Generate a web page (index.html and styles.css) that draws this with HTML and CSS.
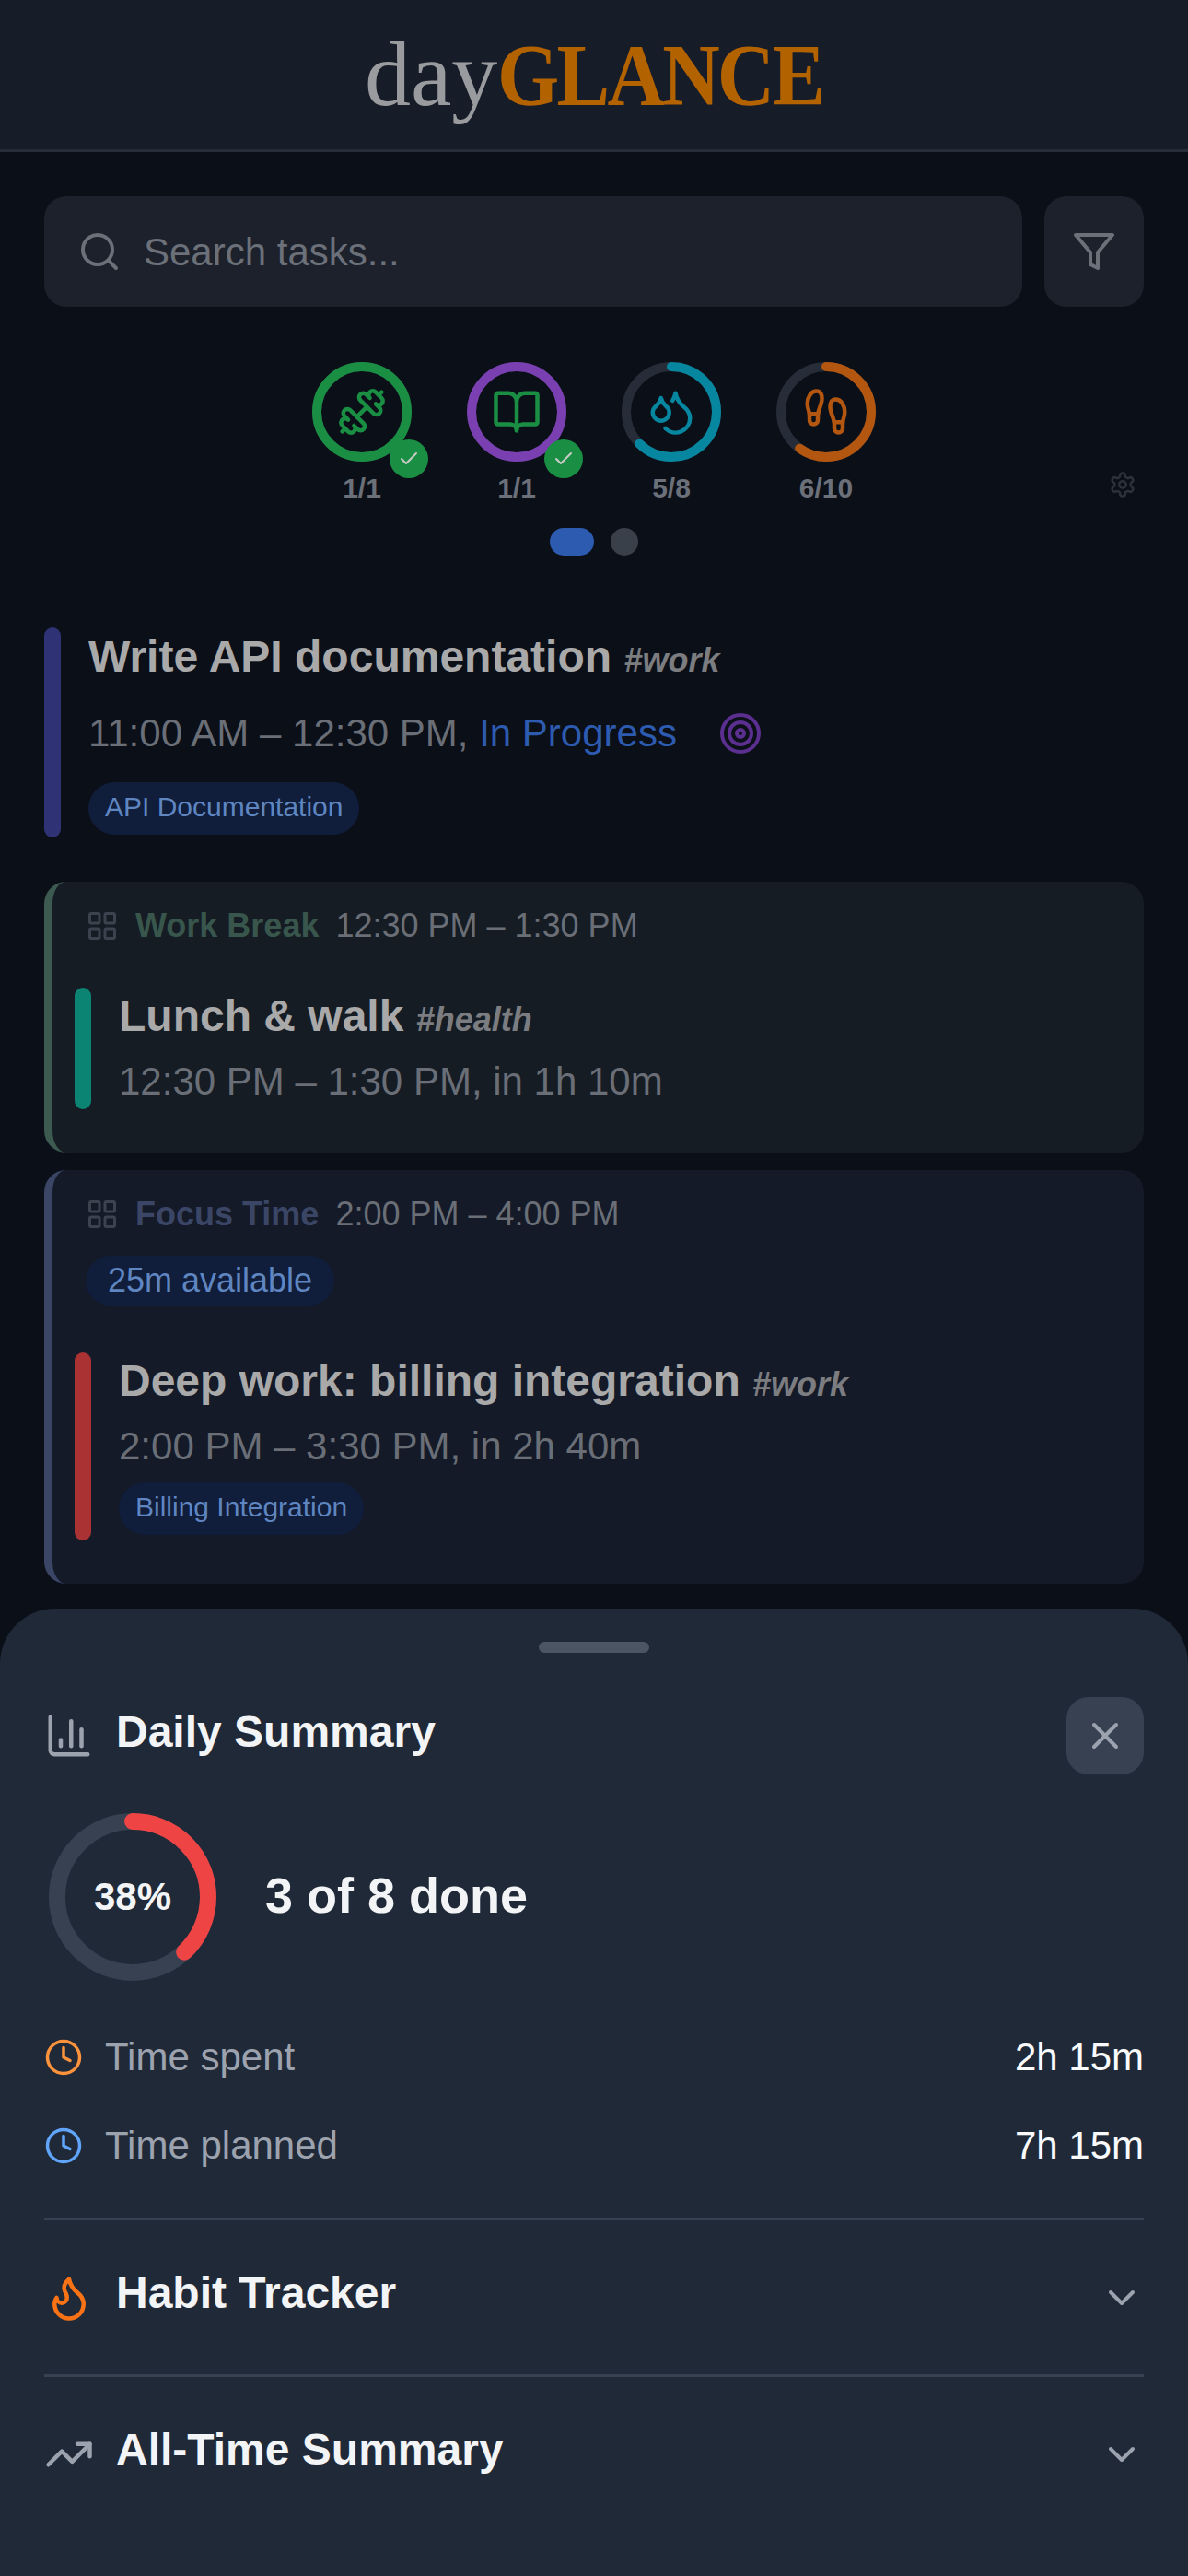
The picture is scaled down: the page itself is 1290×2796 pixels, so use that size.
FILE: index.html
```html
<!DOCTYPE html>
<html>

<head>
    <meta charset="utf-8">
    <title>dayGLANCE</title>
    <link rel="stylesheet" href="styles.css">
</head>

<body>
    <header class="topbar">
        <h1 class="logo"><span class="logo-day">day</span><span class="logo-glance">GLANCE</span></h1>
    </header>

    <main class="content">
        <div class="search-row">
            <div class="search-box">
                <svg class="icon search-icon" viewBox="0 0 24 24"><circle cx="11" cy="11" r="8"/><path d="m21 21-4.3-4.3"/></svg>
                <span class="search-text">Search tasks...</span>
            </div>
            <button class="filter-btn">
                <svg class="icon filter-icon" viewBox="0 0 24 24"><polygon points="22 3 2 3 10 12.46 10 19 14 21 14 12.46 22 3"/></svg>
            </button>
        </div>

        <!-- habit rings -->
        <section class="habits">
            <div class="habit">
                <div class="ring">
                    <svg class="ring-svg" viewBox="0 0 108 108">
                        <circle class="ring-track" cx="54" cy="54" r="49"/>
                        <circle class="ring-fill green" cx="54" cy="54" r="49" pathLength="100" stroke-dasharray="100 100" transform="rotate(-90 54 54)"/>
                    </svg>
                    <svg class="icon ring-icon green-text" viewBox="0 0 24 24"><g transform="matrix(-1 0 0 1 24 0)"><path d="M14.4 14.4 9.6 9.6"/><path d="M18.657 21.485a2 2 0 1 1-2.829-2.828l-1.767 1.768a2 2 0 1 1-2.829-2.829l6.364-6.364a2 2 0 1 1 2.829 2.829l-1.768 1.767a2 2 0 1 1 2.828 2.829z"/><path d="m21.5 21.5-1.4-1.4"/><path d="M3.9 3.9 2.5 2.5"/><path d="M6.404 12.768a2 2 0 1 1-2.829-2.829l1.768-1.767a2 2 0 1 1-2.828-2.829l2.828-2.828a2 2 0 1 1 2.829 2.828l1.767-1.768a2 2 0 1 1 2.829 2.829z"/></g></svg>
                    <span class="ring-check"><svg class="icon check-icon" viewBox="0 0 24 24"><path d="M20 6 9 17l-5-5"/></svg></span>
                </div>
                <div class="habit-count">1/1</div>
            </div>
            <div class="habit">
                <div class="ring">
                    <svg class="ring-svg" viewBox="0 0 108 108">
                        <circle class="ring-track" cx="54" cy="54" r="49"/>
                        <circle class="ring-fill purple" cx="54" cy="54" r="49" pathLength="100" stroke-dasharray="100 100" transform="rotate(-90 54 54)"/>
                    </svg>
                    <svg class="icon ring-icon green-text" viewBox="0 0 24 24"><path d="M12 7v14"/><path d="M3 18a1 1 0 0 1-1-1V4a1 1 0 0 1 1-1h5a4 4 0 0 1 4 4 4 4 0 0 1 4-4h5a1 1 0 0 1 1 1v13a1 1 0 0 1-1 1h-6a3 3 0 0 0-3 3 3 3 0 0 0-3-3z"/></svg>
                    <span class="ring-check"><svg class="icon check-icon" viewBox="0 0 24 24"><path d="M20 6 9 17l-5-5"/></svg></span>
                </div>
                <div class="habit-count">1/1</div>
            </div>
            <div class="habit">
                <div class="ring">
                    <svg class="ring-svg" viewBox="0 0 108 108">
                        <circle class="ring-track" cx="54" cy="54" r="49"/>
                        <circle class="ring-fill teal" cx="54" cy="54" r="49" pathLength="100" stroke-dasharray="62.5 100" transform="rotate(-90 54 54)"/>
                    </svg>
                    <svg class="icon ring-icon teal-text" viewBox="0 0 24 24"><path d="M7 16.3c2.2 0 4-1.83 4-4.05 0-1.16-.57-2.26-1.71-3.19S7.29 6.75 7 5.3c-.29 1.45-1.14 2.84-2.29 3.76S3 11.1 3 12.25c0 2.22 1.8 4.05 4 4.05z"/><path d="M12.56 6.6A10.97 10.97 0 0 0 14 3.02c.5 2.5 2 4.9 4 6.5s3 3.5 3 5.5a6.98 6.98 0 0 1-11.91 4.97"/></svg>
                </div>
                <div class="habit-count">5/8</div>
            </div>
            <div class="habit">
                <div class="ring">
                    <svg class="ring-svg" viewBox="0 0 108 108">
                        <circle class="ring-track" cx="54" cy="54" r="49"/>
                        <circle class="ring-fill orange" cx="54" cy="54" r="49" pathLength="100" stroke-dasharray="60 100" transform="rotate(-90 54 54)"/>
                    </svg>
                    <svg class="icon ring-icon orange-text" viewBox="0 0 24 24"><path d="M4 16v-2.38C4 11.5 2.97 10.5 3 8c.03-2.72 1.49-6 4.5-6C9.37 2 10 3.8 10 5.5c0 3.11-2 5.66-2 8.68V16a2 2 0 1 1-4 0Z"/><path d="M20 20v-2.38c0-2.12 1.03-3.12 1-5.62-.03-2.72-1.44-6-4.5-6C14.63 6 14 7.8 14 9.5c0 3.11 2 5.66 2 8.68V20a2 2 0 1 0 4 0Z"/><path d="M16 17h4"/><path d="M4 13h4"/></svg>
                </div>
                <div class="habit-count">6/10</div>
            </div>
            <svg class="icon habits-gear" viewBox="0 0 24 24"><path d="M12.22 2h-.44a2 2 0 0 0-2 2v.18a2 2 0 0 1-1 1.73l-.43.25a2 2 0 0 1-2 0l-.15-.08a2 2 0 0 0-2.73.73l-.22.38a2 2 0 0 0 .73 2.73l.15.1a2 2 0 0 1 1 1.72v.51a2 2 0 0 1-1 1.74l-.15.09a2 2 0 0 0-.73 2.73l.22.38a2 2 0 0 0 2.73.73l.15-.08a2 2 0 0 1 2 0l.43.25a2 2 0 0 1 1 1.73V20a2 2 0 0 0 2 2h.44a2 2 0 0 0 2-2v-.18a2 2 0 0 1 1-1.73l.43-.25a2 2 0 0 1 2 0l.15.08a2 2 0 0 0 2.73-.73l.22-.39a2 2 0 0 0-.73-2.73l-.15-.08a2 2 0 0 1-1-1.74v-.5a2 2 0 0 1 1-1.74l.15-.09a2 2 0 0 0 .73-2.73l-.22-.38a2 2 0 0 0-2.73-.73l-.15.08a2 2 0 0 1-2 0l-.43-.25a2 2 0 0 1-1-1.73V4a2 2 0 0 0-2-2z"/><circle cx="12" cy="12" r="3"/></svg>
        </section>

        <div class="pager">
            <span class="pager-dot active"></span>
            <span class="pager-dot"></span>
        </div>

        <!-- schedule -->
        <article class="task task-open">
            <div class="task-bar indigo"></div>
            <div class="task-body">
                <div class="task-title">Write API documentation <em class="task-tag">#work</em></div>
                <div class="task-time task-time-row">
                    <span>11:00 AM – 12:30 PM, <span class="in-progress">In Progress</span></span>
                    <svg class="icon target-icon" viewBox="0 0 24 24"><circle cx="12" cy="12" r="10"/><circle cx="12" cy="12" r="6"/><circle cx="12" cy="12" r="2"/></svg>
                </div>
                <span class="pill task-pill">API Documentation</span>
            </div>
        </article>

        <section class="slot slot-break">
            <div class="slot-head">
                <svg class="icon slot-icon" viewBox="0 0 24 24"><rect x="3" y="3" width="7" height="7" rx="1"/><rect x="14" y="3" width="7" height="7" rx="1"/><rect x="14" y="14" width="7" height="7" rx="1"/><rect x="3" y="14" width="7" height="7" rx="1"/></svg>
                <span class="slot-name">Work Break</span>
                <span class="slot-time">12:30 PM – 1:30 PM</span>
            </div>
            <article class="task">
                <div class="task-bar green-bar"></div>
                <div class="task-body">
                    <div class="task-title">Lunch &amp; walk <em class="task-tag">#health</em></div>
                    <div class="task-time">12:30 PM – 1:30 PM, in 1h 10m</div>
                </div>
            </article>
        </section>

        <section class="slot slot-focus">
            <div class="slot-head">
                <svg class="icon slot-icon" viewBox="0 0 24 24"><rect x="3" y="3" width="7" height="7" rx="1"/><rect x="14" y="3" width="7" height="7" rx="1"/><rect x="14" y="14" width="7" height="7" rx="1"/><rect x="3" y="14" width="7" height="7" rx="1"/></svg>
                <span class="slot-name">Focus Time</span>
                <span class="slot-time">2:00 PM – 4:00 PM</span>
            </div>
            <span class="pill slot-pill">25m available</span>
            <article class="task">
                <div class="task-bar red-bar"></div>
                <div class="task-body">
                    <div class="task-title">Deep work: billing integration <em class="task-tag">#work</em></div>
                    <div class="task-time">2:00 PM – 3:30 PM, in 2h 40m</div>
                    <span class="pill nested-pill">Billing Integration</span>
                </div>
            </article>
        </section>
    </main>

    <!-- bottom sheet -->
    <aside class="sheet">
        <div class="sheet-handle"></div>
        <div class="sheet-head">
            <svg class="icon sheet-icon gray-text" viewBox="0 0 24 24"><path d="M3 3v16a2 2 0 0 0 2 2h16"/><path d="M18 17V9"/><path d="M13 17V5"/><path d="M8 17v-3"/></svg>
            <h2 class="sheet-title">Daily Summary</h2>
            <button class="close-btn">
                <svg class="icon close-icon" viewBox="0 0 24 24"><path d="M18 6 6 18"/><path d="m6 6 12 12"/></svg>
            </button>
        </div>

        <div class="progress">
            <div class="progress-ring">
                <svg class="progress-svg" viewBox="0 0 192 192">
                    <circle class="progress-track" cx="96" cy="96" r="82"/>
                    <circle class="progress-fill" cx="96" cy="96" r="82" pathLength="100" stroke-dasharray="38 100" transform="rotate(-90 96 96)"/>
                </svg>
                <span class="progress-pct">38%</span>
            </div>
            <div class="progress-text">3 of 8 done</div>
        </div>

        <div class="stat">
            <svg class="icon stat-icon amber-text" viewBox="0 0 24 24"><circle cx="12" cy="12" r="10"/><path d="M12 6v6l4 2"/></svg>
            <span class="stat-label">Time spent</span>
            <span class="stat-value">2h 15m</span>
        </div>
        <div class="stat">
            <svg class="icon stat-icon blue-text" viewBox="0 0 24 24"><circle cx="12" cy="12" r="10"/><path d="M12 6v6l4 2"/></svg>
            <span class="stat-label">Time planned</span>
            <span class="stat-value">7h 15m</span>
        </div>

        <div class="fold fold-first">
            <svg class="icon sheet-icon flame-text" viewBox="0 0 24 24"><path d="M8.5 14.5A2.5 2.5 0 0 0 11 12c0-1.38-.5-2-1-3-1.072-2.143-.224-4.054 2-6 .5 2.5 2 4.9 4 6.5 2 1.6 3 3.5 3 5.5a7 7 0 1 1-14 0c0-1.153.433-2.294 1-3a2.5 2.5 0 0 0 2.5 2.5z"/></svg>
            <h2 class="sheet-title">Habit Tracker</h2>
            <svg class="icon chevron" viewBox="0 0 24 24"><path d="m6 9 6 6 6-6"/></svg>
        </div>
        <div class="fold">
            <svg class="icon sheet-icon gray-text" viewBox="0 0 24 24"><path d="M22 7 13.5 15.5 8.5 10.5 2 17"/><path d="M16 7h6v6"/></svg>
            <h2 class="sheet-title">All-Time Summary</h2>
            <svg class="icon chevron" viewBox="0 0 24 24"><path d="m6 9 6 6 6-6"/></svg>
        </div>
    </aside>
</body>

</html>
```

FILE: styles.css
```css
* {
    margin: 0;
    padding: 0;
    box-sizing: border-box;
}

body {
    position: relative;
    width: 1290px;
    height: 2796px;
    overflow: hidden;
    background-color: #0b0f18;
    font-family: "Liberation Sans", Arial, sans-serif;
}

button {
    border: none;
    font: inherit;
}

.icon {
    display: block;
    flex-shrink: 0;
    fill: none;
    stroke: currentColor;
    stroke-width: 2;
    stroke-linecap: round;
    stroke-linejoin: round;
}

/* top bar */
.topbar {
    height: 165px;
    padding-top: 26px;
    background-color: #161d28;
    border-bottom: 3px solid #272d39;
    text-align: center;
}

.logo {
    font-family: "Liberation Serif", "Times New Roman", serif;
    font-size: 100px;
    line-height: 110px;
}

.logo-day {
    font-weight: 400;
    color: #9a9b9e;
}

/* squeezed wordmark, the negative margin takes back the width it no longer draws */
.logo-glance {
    display: inline-block;
    margin-right: -39px;
    font-size: 96px;
    font-weight: 700;
    letter-spacing: -3px;
    color: #b36200;
    transform: scaleX(0.9);
    transform-origin: left center;
}

.content {
    padding: 48px 48px 0;
}

/* search */
.search-row {
    display: flex;
    gap: 24px;
}

.search-box {
    flex: 1;
    height: 120px;
    display: flex;
    align-items: center;
    gap: 24px;
    padding-left: 36px;
    background-color: #1c212c;
    border-radius: 24px;
    color: #6b7079;
}

.search-icon {
    width: 48px;
    height: 48px;
}

.search-text {
    padding-top: 1px;
    font-size: 42px;
}

.filter-btn {
    width: 108px;
    height: 120px;
    display: flex;
    align-items: center;
    justify-content: center;
    background-color: #1c212c;
    border-radius: 24px;
    color: #6b7079;
}

.filter-icon {
    width: 48px;
    height: 48px;
}

/* habits */
.habits {
    position: relative;
    display: flex;
    justify-content: center;
    gap: 60px;
    margin-top: 60px;
}

.habit {
    width: 108px;
}

.ring {
    position: relative;
    width: 108px;
    height: 108px;
    display: flex;
    align-items: center;
    justify-content: center;
}

.ring-svg {
    position: absolute;
    top: 0;
    left: 0;
    width: 108px;
    height: 108px;
}

.ring-track,
.ring-fill {
    fill: none;
    stroke-width: 10;
}

.ring-track {
    stroke: #272d38;
}

.ring-fill {
    stroke-linecap: round;
}

.green { stroke: #1a8f44; }
.purple { stroke: #7a3fb0; }
.teal { stroke: #06869f; }
.orange { stroke: #b3560f; }

.green-text { color: #1a8f44; }
.teal-text { color: #06869f; }
.orange-text { color: #b3560f; }

.ring-icon {
    position: relative;
    width: 54px;
    height: 54px;
}

.ring-check {
    position: absolute;
    right: -18px;
    bottom: -18px;
    width: 42px;
    height: 42px;
    display: flex;
    align-items: center;
    justify-content: center;
    background-color: #1a8f44;
    border-radius: 50%;
    color: #c9cbc9;
}

.check-icon {
    width: 24px;
    height: 24px;
}

.habit-count {
    margin-top: 11px;
    font-size: 30px;
    line-height: 36px;
    font-weight: 700;
    text-align: center;
    color: #6b7079;
}

.habits-gear {
    position: absolute;
    top: 118px;
    right: 8px;
    width: 30px;
    height: 30px;
    color: #2c313c;
}

.pager {
    display: flex;
    justify-content: center;
    gap: 18px;
    margin-top: 25px;
}

.pager-dot {
    width: 30px;
    height: 30px;
    border-radius: 15px;
    background-color: #3a404a;
}

.pager-dot.active {
    width: 48px;
    background-color: #2d5bb0;
}

/* tasks */
.task {
    display: flex;
    gap: 30px;
}

.task-open {
    margin-top: 78px;
    margin-bottom: 48px;
}

.task-bar {
    width: 18px;
    flex-shrink: 0;
    border-radius: 9px;
}

.indigo { background-color: #2f3375; }
.green-bar { background-color: #0b8474; }
.red-bar { background-color: #ab3232; }

.task-body {
    padding-top: 1px;
}

.task-open .task-body {
    padding-top: 2px;
}

.task-title {
    font-size: 48px;
    line-height: 60px;
    font-weight: 700;
    color: #a9a9aa;
}

.task-tag {
    font-size: 36px;
    line-height: 1;
    font-weight: 700;
    color: #7c7d80;
}

.task-time {
    margin-top: 11px;
    font-size: 42px;
    line-height: 60px;
    color: #6a6e76;
}

.task-time-row {
    display: flex;
    align-items: center;
    gap: 45px;
    margin-top: 23px;
}

.in-progress {
    color: #2d5bb0;
}

.target-icon {
    width: 48px;
    height: 48px;
    color: #5b2f8f;
}

.pill {
    display: inline-block;
    border-radius: 30px;
    background-color: #101d3b;
    color: #5f86c0;
}

.task-pill,
.nested-pill {
    display: block;
    width: fit-content;
    padding: 0 18px 4px;
    font-size: 30px;
    line-height: 53px;
}

.task-pill {
    margin-top: 23px;
    margin-bottom: 3px;
}

.nested-pill {
    margin-top: 9px;
    margin-bottom: 6px;
}

/* free-time slots */
.slot {
    padding: 21px 0 47px 24px;
    border-left: 9px solid;
    border-radius: 24px;
}

.slot-break {
    background-color: #151c24;
    border-color: #3c5a50;
    margin-bottom: 19px;
}

.slot-focus {
    background-color: #141a28;
    border-color: #3b4666;
}

.slot-head {
    display: flex;
    align-items: center;
    height: 54px;
    margin-bottom: 18px;
    padding-left: 12px;
}

.slot-icon {
    width: 36px;
    height: 36px;
    color: #3c434e;
}

.slot-name {
    margin-left: 18px;
    font-size: 36px;
    font-weight: 700;
}

.slot-break .slot-name { color: #38564c; }
.slot-focus .slot-name { color: #3b4666; }

.slot-time {
    margin-left: 18px;
    font-size: 36px;
    color: #6a6e76;
}

.slot-head + .task {
    margin-top: 40px;
}

.slot-pill {
    display: table;
    margin-left: 12px;
    margin-bottom: 51px;
    padding: 0 24px;
    font-size: 36px;
    line-height: 54px;
}

.slot-break .slot-head {
    margin-bottom: 0;
}

/* bottom sheet */
.sheet {
    position: absolute;
    left: 0;
    right: 0;
    bottom: 0;
    height: 1050px;
    padding: 36px 48px 0;
    background-color: #202938;
    border-radius: 60px 60px 0 0;
}

.sheet-handle {
    width: 120px;
    height: 12px;
    margin: 0 auto 48px;
    border-radius: 6px;
    background-color: #4b5563;
}

.sheet-head {
    display: flex;
    align-items: center;
    gap: 24px;
}

.sheet-icon {
    width: 54px;
    height: 54px;
}

.gray-text { color: #9ca3af; }
.flame-text { color: #f97316; }
.amber-text { color: #fb923c; }
.blue-text { color: #60a5fa; }

.sheet-title {
    margin-bottom: 10px;
    font-size: 48px;
    font-weight: 700;
    color: #f3f4f6;
}

.close-btn {
    width: 84px;
    height: 84px;
    margin-left: auto;
    display: flex;
    align-items: center;
    justify-content: center;
    border-radius: 24px;
    background-color: #374151;
    color: #9ca3af;
}

.close-icon {
    width: 48px;
    height: 48px;
}

.progress {
    display: flex;
    align-items: center;
    gap: 48px;
    margin-top: 37px;
}

.progress-ring {
    position: relative;
    width: 192px;
    height: 192px;
    display: flex;
    align-items: center;
    justify-content: center;
}

.progress-svg {
    position: absolute;
    top: 0;
    left: 0;
    width: 192px;
    height: 192px;
}

.progress-track,
.progress-fill {
    fill: none;
    stroke-width: 18;
}

.progress-track {
    stroke: #374151;
}

.progress-fill {
    stroke: #ef4444;
    stroke-linecap: round;
}

.progress-pct {
    position: relative;
    font-size: 42px;
    font-weight: 700;
    color: #f3f4f6;
}

.progress-text {
    margin-bottom: 4px;
    font-size: 54px;
    font-weight: 700;
    color: #f3f4f6;
}

.stat {
    display: flex;
    align-items: center;
    height: 96px;
    font-size: 42px;
}

.progress + .stat {
    margin-top: 30px;
}

.stat-icon {
    width: 42px;
    height: 42px;
}

.stat-label {
    margin-left: 24px;
    color: #9ca3af;
}

.stat-value {
    margin-left: auto;
    color: #f9fafb;
}

.fold {
    display: flex;
    align-items: center;
    gap: 24px;
    height: 170px;
    border-top: 3px solid #374151;
}

.fold-first {
    margin-top: 30px;
}

.chevron {
    width: 48px;
    height: 48px;
    margin-left: auto;
    color: #9ca3af;
}
```
